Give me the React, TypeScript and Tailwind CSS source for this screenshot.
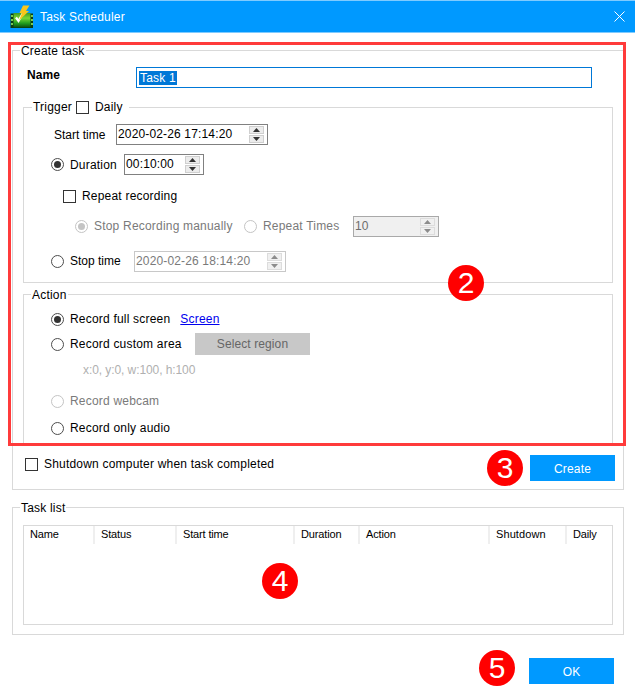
import type { ReactNode } from "react";

function Radio({ on, off }: { on?: boolean; off?: boolean }) {
  return (
    <span
      className={`flex h-[13px] w-[13px] shrink-0 items-center justify-center rounded-full border bg-white ${
        off ? "border-[#c4c4c4]" : "border-[#4d4d4d]"
      }`}
    >
      {on ? (
        <span
          className={`h-[7px] w-[7px] rounded-full ${off ? "bg-[#c4c4c4]" : "bg-[#333333]"}`}
        />
      ) : null}
    </span>
  );
}

function Check({ className }: { className?: string }) {
  return (
    <span
      className={`block h-[13px] w-[13px] shrink-0 border border-[#333333] bg-white ${className ?? ""}`}
    />
  );
}

function Spin({ off }: { off?: boolean }) {
  const arrow = off ? "#8c8c8c" : "#333333";
  const bg = off ? "bg-[#f0f0f0] border-[#dcdcdc]" : "bg-[#ececec] border-[#cfcfcf]";
  return (
    <span className="flex w-[15px] shrink-0 flex-col gap-px">
      <span className={`flex h-[8px] items-center justify-center border ${bg}`}>
        <svg width="7" height="4" viewBox="0 0 7 4">
          <path d="M3.5 0L7 4H0z" fill={arrow} />
        </svg>
      </span>
      <span className={`flex h-[8px] items-center justify-center border ${bg}`}>
        <svg width="7" height="4" viewBox="0 0 7 4">
          <path d="M0 0H7L3.5 4z" fill={arrow} />
        </svg>
      </span>
    </span>
  );
}

function SpinBox({
  value,
  width,
  off,
  gray,
}: {
  value: string;
  width: string;
  off?: boolean;
  gray?: boolean;
}) {
  return (
    <div
      className={`flex h-[21px] shrink-0 items-center justify-between border pl-[1px] pr-[3px] tracking-[0.15px] ${width} ${
        gray
          ? "border-[#a9a9a9] bg-[#f0f0f0] text-[#6d6d6d]"
          : off
            ? "border-[#c8c8c8] text-[#7a7a7a]"
            : "border-[#808080] text-black"
      }`}
    >
      <span className="-mt-px">{value}</span>
      <Spin off={off || gray} />
    </div>
  );
}

function Legend({ children }: { children: ReactNode }) {
  return (
    <div className="relative -mt-[8px] ml-[7px] h-[14px] w-fit bg-white px-px pt-px leading-[14px]">
      {children}
    </div>
  );
}

function Option({
  label,
  on,
  off,
  className,
}: {
  label: string;
  on?: boolean;
  off?: boolean;
  className?: string;
}) {
  return (
    <div className={`flex h-[14px] items-center gap-[6px] pl-[27px] ${className ?? ""}`}>
      <Radio on={on} off={off} />
      <span className={off ? "text-[#7a7a7a]" : ""}>{label}</span>
    </div>
  );
}

// number badges drawn over the dialog
function Badge({ n, className }: { n: number; className: string }) {
  return (
    <div
      className={`absolute flex h-[36px] w-[36px] items-center justify-center rounded-full bg-[#ff0000] text-[30px] leading-none tracking-normal text-white ${className}`}
    >
      {n}
    </div>
  );
}

function Logo() {
  return (
    <svg width="24" height="24" viewBox="0 0 24 24" className="ml-[9px] shrink-0">
      <defs>
        <linearGradient id="film" x1="0" y1="0" x2="0" y2="1">
          <stop offset="0" stopColor="#3f9a22" />
          <stop offset="0.35" stopColor="#79d636" />
          <stop offset="0.7" stopColor="#22a020" />
          <stop offset="1" stopColor="#0a4f10" />
        </linearGradient>
      </defs>
      <path d="M1.500 8.500H24V23H1.500z" fill="#0b3d10" />
      <path d="M4.500 8H21.500V22.500H4.500z" fill="url(#film)" />
      <path
        d="M2 10h2v2H2zM2 14h2v2H2zM2 18h2v2H2zM22 10h2v2h-2zM22 14h2v2h-2zM22 18h2v2h-2z"
        fill="#79c94e"
      />
      <path d="M7 12.500L9.500 16L14 8" stroke="#ffffff" strokeWidth="2.200" fill="none" />
      <path d="M14 0.500H20.500L17 6H20L10 15.500L13 8H10.500z" fill="#f7c61c" />
    </svg>
  );
}

const columns = [
  { label: "Name", width: "w-[71px]", spacing: "" },
  { label: "Status", width: "w-[82px]", spacing: "" },
  { label: "Start time", width: "w-[118px]", spacing: "" },
  { label: "Duration", width: "w-[65px]", spacing: "" },
  { label: "Action", width: "w-[130px]", spacing: "" },
  { label: "Shutdown", width: "w-[77px]", spacing: "tracking-[0.1px]" },
  { label: "Daily", width: "flex-1", spacing: "" },
];

export default function App() {
  return (
    <div className="relative flex h-[691px] w-[635px] flex-col overflow-hidden bg-white font-['Liberation_Sans',Arial,sans-serif] text-[12px] leading-[14px] tracking-[0.2px] text-black">
      <div className="flex h-[33px] shrink-0 items-center border-y border-y-[#7fcbff] bg-[#0099ff] text-white">
        <Logo />
        <span className="ml-[7px] flex-1">Task Scheduler</span>
        <svg width="11" height="11" viewBox="0 0 11 11" className="mb-px mr-[10px]">
          <path d="M0.500 0.500L10.500 10.500M10.500 0.500L0.500 10.500" stroke="#ffffff" strokeWidth="1" />
        </svg>
      </div>

      <div className="ml-[12px] mt-[17px] h-[440px] w-[612px] shrink-0 border border-[#d9d9d9]">
        <Legend>Create task</Legend>

        <div className="mt-[10px] flex">
          <div className="mt-px ml-[14px] w-[109px] font-bold tracking-[0.1px]">Name</div>
          <div className="flex h-[21px] w-[456px] items-center border border-[#0078d7] pl-[2px]">
            <span className="bg-[#0078d7] px-px text-white">Task 1</span>
          </div>
        </div>

        <div className="ml-[10px] mt-[19px] h-[176px] w-[590px] border border-[#d9d9d9]">
          <div className="-mt-[8px] ml-[8px] flex h-[14px] w-[97px] items-center bg-white pl-px">
            <span className="-mt-px">Trigger</span>
            <Check className="ml-[4px]" />
            <span className="ml-[6px]">Daily</span>
          </div>

          <div className="mt-[10px] flex items-center pl-[30px]">
            <span className="w-[62px] tracking-normal">Start time</span>
            <SpinBox value="2020-02-26 17:14:20" width="w-[152px]" />
          </div>

          <div className="mt-[9px] flex items-center pl-[27px]">
            <Radio on />
            <span className="ml-[6px] w-[54px]">Duration</span>
            <SpinBox value="00:10:00" width="w-[80px]" />
          </div>

          <div className="mt-[14px] flex h-[14px] items-center gap-[6px] pl-[39px]">
            <Check />
            <span>Repeat recording</span>
          </div>

          <div className="mt-[13px] flex items-center pl-[51px] text-[#7a7a7a]">
            <Radio on off />
            <span className="-mt-px ml-[6px] w-[150px]">Stop Recording manually</span>
            <Radio off />
            <span className="-mt-px ml-[6px] w-[90px]">Repeat Times</span>
            <SpinBox value="10" width="w-[86px]" gray />
          </div>

          <div className="mt-[14px] flex items-center pl-[27px]">
            <Radio />
            <span className="-mt-px ml-[6px] w-[64px] tracking-normal">Stop time</span>
            <SpinBox value="2020-02-26 18:14:20" width="w-[152px]" off />
          </div>
        </div>

        <div className="ml-[10px] mt-[11px] h-[151px] w-[590px] border border-[#d9d9d9]">
          <Legend>Action</Legend>

          <div className="mt-[11px] flex h-[14px] items-center gap-[6px] pl-[27px]">
            <Radio on />
            <span>Record full screen</span>
            <span className="ml-[4px] text-[#0000ee] underline">Screen</span>
          </div>

          <div className="mt-[7px] flex h-[22px] items-center pl-[27px]">
            <Radio />
            <span className="ml-[6px] w-[125px]">Record custom area</span>
            <div className="flex h-[22px] w-[115px] items-center justify-center bg-[#c8c8c8] tracking-[0.1px] text-[#666666]">
              Select region
            </div>
          </div>

          <div className="mt-[8px] pl-[59px] tracking-[-0.08px] text-[#b0b0b0]">
            x:0, y:0, w:100, h:100
          </div>

          <Option label="Record webcam" off className="mt-[17px]" />
          <Option label="Record only audio" className="mt-[13px]" />
        </div>

        <div className="mt-[10px] flex items-start justify-between pl-[12px] pr-[8px]">
          <div className="mt-[2px] flex h-[14px] items-center gap-[6px]">
            <Check />
            <span>Shutdown computer when task completed</span>
          </div>
          <div className="flex h-[26px] w-[85px] items-center justify-center bg-[#0099ff] pt-px text-white">
            Create
          </div>
        </div>
      </div>

      <div className="ml-[12px] mt-[17px] h-[128px] w-[612px] shrink-0 border border-[#d9d9d9]">
        <Legend>Task list</Legend>
        <div className="ml-[10px] mt-[11px] h-[100px] w-[590px] border border-[#d9d9d9]">
          <div className="flex h-[18px] text-[11px] tracking-[-0.15px]">
            {columns.map((c, i) => (
              <div
                key={c.label}
                className={`flex items-center pb-[2px] pl-[6px] ${c.width} ${c.spacing} ${
                  i < columns.length - 1 ? "border-r-2 border-r-[#efefef]" : ""
                }`}
              >
                {c.label}
              </div>
            ))}
          </div>
        </div>
      </div>

      <div className="mr-[21px] mt-[23px] flex h-[26px] w-[85px] shrink-0 items-center justify-center self-end bg-[#0099ff] pt-px text-white">
        OK
      </div>

      {/* red callout frame and number badges */}
      <div className="absolute left-[8px] top-[42px] h-[404px] w-[618px] border-[3px] border-[#ff3b3b]" />
      <Badge n={2} className="left-[448px] top-[265px]" />
      <Badge n={3} className="left-[487px] top-[450px]" />
      <Badge n={4} className="left-[262px] top-[563px]" />
      <Badge n={5} className="left-[479px] top-[650px]" />
    </div>
  );
}
